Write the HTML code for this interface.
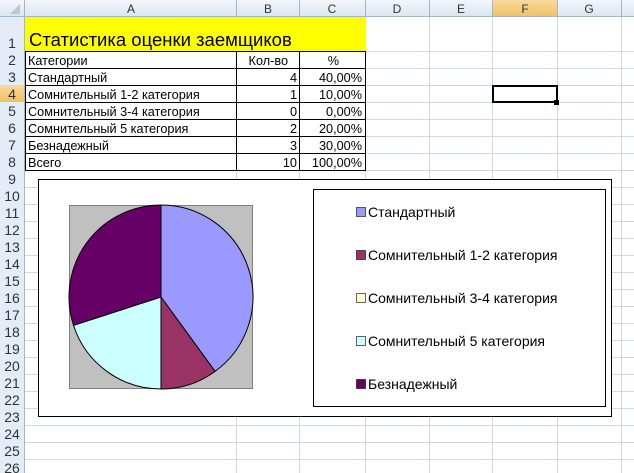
<!DOCTYPE html>
<html><head><meta charset="utf-8"><style>
body{margin:0;width:634px;height:473px;overflow:hidden;background:#fff}
svg{display:block}
text{font-family:"Liberation Sans","DejaVu Sans",sans-serif}
</style></head><body>
<svg width="634" height="473" xmlns="http://www.w3.org/2000/svg">
<defs>
<linearGradient id="hg" x1="0" y1="0" x2="0" y2="1"><stop offset="0" stop-color="#f3f6fb"/><stop offset="1" stop-color="#dbe4f0"/></linearGradient>
<linearGradient id="og" x1="0" y1="0" x2="0" y2="1"><stop offset="0" stop-color="#f9d99f"/><stop offset="1" stop-color="#f1c15f"/></linearGradient>
</defs>
<rect width="634" height="473" fill="#fff"/>
<g stroke="#d0d7e5" stroke-width="1">
<line x1="236.5" y1="17" x2="236.5" y2="473"/><line x1="299.5" y1="17" x2="299.5" y2="473"/>
<line x1="365.5" y1="17" x2="365.5" y2="473"/><line x1="429.5" y1="17" x2="429.5" y2="473"/>
<line x1="492.5" y1="17" x2="492.5" y2="473"/><line x1="557.5" y1="17" x2="557.5" y2="473"/>
<line x1="621.5" y1="17" x2="621.5" y2="473"/>
<line x1="25" y1="51.5" x2="634" y2="51.5"/>
<line x1="25" y1="68.5" x2="634" y2="68.5"/><line x1="25" y1="85.5" x2="634" y2="85.5"/>
<line x1="25" y1="102.5" x2="634" y2="102.5"/><line x1="25" y1="119.5" x2="634" y2="119.5"/>
<line x1="25" y1="136.5" x2="634" y2="136.5"/><line x1="25" y1="153.5" x2="634" y2="153.5"/>
<line x1="25" y1="170.5" x2="634" y2="170.5"/><line x1="25" y1="187.5" x2="634" y2="187.5"/>
<line x1="25" y1="204.5" x2="634" y2="204.5"/><line x1="25" y1="221.5" x2="634" y2="221.5"/>
<line x1="25" y1="238.5" x2="634" y2="238.5"/><line x1="25" y1="255.5" x2="634" y2="255.5"/>
<line x1="25" y1="272.5" x2="634" y2="272.5"/><line x1="25" y1="289.5" x2="634" y2="289.5"/>
<line x1="25" y1="306.5" x2="634" y2="306.5"/><line x1="25" y1="323.5" x2="634" y2="323.5"/>
<line x1="25" y1="340.5" x2="634" y2="340.5"/><line x1="25" y1="357.5" x2="634" y2="357.5"/>
<line x1="25" y1="374.5" x2="634" y2="374.5"/><line x1="25" y1="391.5" x2="634" y2="391.5"/>
<line x1="25" y1="408.5" x2="634" y2="408.5"/><line x1="25" y1="425.5" x2="634" y2="425.5"/>
<line x1="25" y1="442.5" x2="634" y2="442.5"/><line x1="25" y1="459.5" x2="634" y2="459.5"/>
</g>
<rect x="0" y="0" width="634" height="17" fill="url(#hg)"/>
<rect x="0" y="17" width="25" height="456" fill="#e4ecf7"/>
<rect x="492" y="0" width="65" height="17" fill="url(#og)"/>
<rect x="0" y="85" width="25" height="17" fill="url(#og)"/>
<g stroke="#9eb6ce" stroke-width="1">
<line x1="0" y1="16.5" x2="634" y2="16.5"/><line x1="24.5" y1="0" x2="24.5" y2="473"/>
<line x1="236.5" y1="0" x2="236.5" y2="17"/><line x1="299.5" y1="0" x2="299.5" y2="17"/>
<line x1="365.5" y1="0" x2="365.5" y2="17"/><line x1="429.5" y1="0" x2="429.5" y2="17"/>
<line x1="492.5" y1="0" x2="492.5" y2="17"/><line x1="557.5" y1="0" x2="557.5" y2="17"/>
<line x1="621.5" y1="0" x2="621.5" y2="17"/>
</g>
<path d="M20 4 L20 14 L10 14 Z" fill="#b9c7d9"/>
<g font-size="12" fill="#333" text-anchor="middle">
<text x="131" y="13">A</text><text x="268" y="13">B</text><text x="332" y="13">C</text>
<text x="397" y="13">D</text><text x="461" y="13">E</text><text x="525" y="13">F</text><text x="589" y="13">G</text>
</g>
<g font-size="14" fill="#333" text-anchor="middle">
<text x="12" y="48">1</text><text x="12" y="65">2</text><text x="12" y="82">3</text><text x="12" y="99">4</text>
<text x="12" y="116">5</text><text x="12" y="133">6</text><text x="12" y="150">7</text><text x="12" y="167">8</text>
<text x="12" y="184">9</text><text x="12" y="201">10</text><text x="12" y="218">11</text><text x="12" y="235">12</text>
<text x="12" y="252">13</text><text x="12" y="269">14</text><text x="12" y="286">15</text><text x="12" y="303">16</text>
<text x="12" y="320">17</text><text x="12" y="337">18</text><text x="12" y="354">19</text><text x="12" y="371">20</text>
<text x="12" y="388">21</text><text x="12" y="405">22</text><text x="12" y="422">23</text><text x="12" y="439">24</text>
<text x="12" y="456">25</text><text x="12" y="473">26</text>
</g>
<rect x="25" y="17" width="341" height="34" fill="#ffff00"/>
<text x="29" y="46" font-size="18.5" fill="#000">Статистика оценки заемщиков</text>
<g stroke="#000" stroke-width="1" fill="none">
<rect x="25.5" y="51.5" width="340" height="119"/>
<line x1="236.5" y1="51" x2="236.5" y2="171"/><line x1="299.5" y1="51" x2="299.5" y2="171"/>
<line x1="25" y1="68.5" x2="366" y2="68.5"/><line x1="25" y1="85.5" x2="366" y2="85.5"/>
<line x1="25" y1="102.5" x2="366" y2="102.5"/><line x1="25" y1="119.5" x2="366" y2="119.5"/>
<line x1="25" y1="136.5" x2="366" y2="136.5"/><line x1="25" y1="153.5" x2="366" y2="153.5"/>
</g>
<g font-size="12.7" fill="#000">
<text x="28" y="65">Категории</text><text x="28" y="82">Стандартный</text>
<text x="28" y="99">Сомнительный 1-2 категория</text><text x="28" y="116">Сомнительный 3-4 категория</text>
<text x="28" y="133">Сомнительный 5 категория</text><text x="28" y="150">Безнадежный</text><text x="28" y="167">Всего</text>
</g>
<g font-size="12.7" fill="#000" text-anchor="end">
<text x="288" y="65">Кол-во</text>
<text x="297" y="82">4</text><text x="297" y="99">1</text><text x="297" y="116">0</text><text x="297" y="133">2</text><text x="297" y="150">3</text><text x="297" y="167">10</text>
<text x="339" y="65">%</text>
<text x="362" y="82">40,00%</text><text x="362" y="99">10,00%</text><text x="362" y="116">0,00%</text><text x="362" y="133">20,00%</text><text x="362" y="150">30,00%</text><text x="362" y="167">100,00%</text>
</g>
<rect x="493" y="86" width="64" height="16" fill="none" stroke="#000" stroke-width="2"/>
<rect x="554" y="100" width="5" height="5" fill="#000"/>
<rect x="38.5" y="179.5" width="573" height="237" fill="#fff" stroke="#000"/>
<rect x="69.5" y="205.5" width="183" height="183" fill="#c0c0c0" stroke="#808080"/>
<g stroke="#000" stroke-width="1">
<path d="M161 297 L161 205 A92 92 0 0 1 215.1 371.4 Z" fill="#9999ff"/>
<path d="M161 297 L215.1 371.4 A92 92 0 0 1 161 389 Z" fill="#993366"/>
<path d="M161 297 L161 389 A92 92 0 0 1 73.5 325.4 Z" fill="#ccffff"/>
<path d="M161 297 L73.5 325.4 A92 92 0 0 1 161 205 Z" fill="#660066"/>
</g>
<rect x="313.5" y="189.5" width="292" height="217" fill="#fff" stroke="#000"/>
<g stroke="#000" stroke-width="0.6">
<rect x="356.5" y="207.5" width="9" height="9" fill="#9999ff"/>
<rect x="356.5" y="250.5" width="9" height="9" fill="#993366"/>
<rect x="356.5" y="293.5" width="9" height="9" fill="#ffffcc"/>
<rect x="356.5" y="336.5" width="9" height="9" fill="#ccffff"/>
<rect x="356.5" y="379.5" width="9" height="9" fill="#660066"/>
</g>
<g font-size="14" fill="#000">
<text x="368" y="217">Стандартный</text>
<text x="368" y="260">Сомнительный 1-2 категория</text>
<text x="368" y="303">Сомнительный 3-4 категория</text>
<text x="368" y="346">Сомнительный 5 категория</text>
<text x="368" y="389">Безнадежный</text>
</g>
</svg>
</body></html>
